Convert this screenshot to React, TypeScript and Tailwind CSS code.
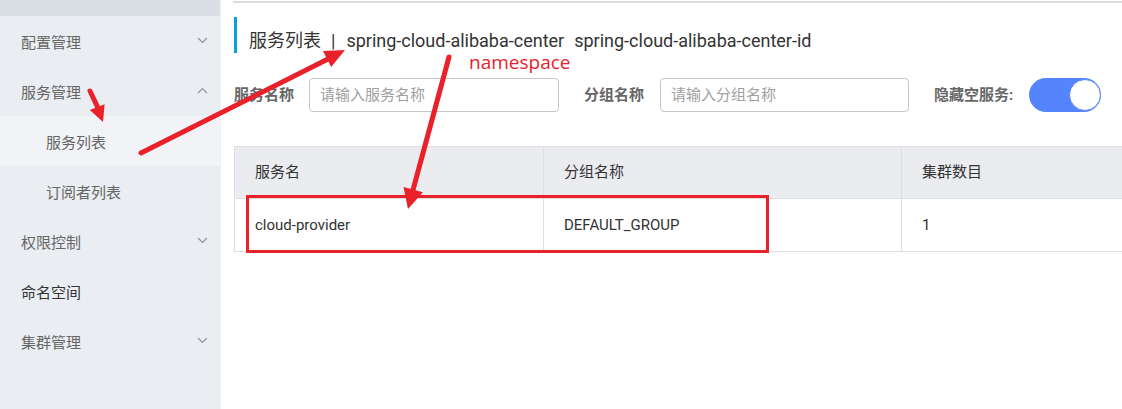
import React from "react";

const font = { fontFamily: 'Roboto, "Noto Sans CJK SC", sans-serif' };

function Chevron({ up }: { up?: boolean }) {
  return (
    <svg width="11" height="7" viewBox="0 0 11 7" className="text-[#8f9399]">
      <polyline
        points={up ? "1,6 5.5,1.5 10,6" : "1,1 5.5,5.5 10,1"}
        fill="none"
        stroke="currentColor"
        strokeWidth="1.1"
      />
    </svg>
  );
}

function NavItem({ label, chevron, dark }: { label: string; chevron?: "up" | "down"; dark?: boolean }) {
  return (
    <div className="h-[50px] flex items-center justify-between pl-[21px] pr-[12px] pt-[4px]">
      <span className={`text-[15px] ${dark ? "text-[#333]" : "text-[#666]"}`}>{label}</span>
      {chevron && (
        <span className="-mt-[6px]">
          <Chevron up={chevron === "up"} />
        </span>
      )}
    </div>
  );
}

function SubItem({ label, active }: { label: string; active?: boolean }) {
  return (
    <div className={`h-[50px] flex items-center pl-[46px] pt-[4px] ${active ? "bg-[#f2f3f7]" : ""}`}>
      <span className="text-[15px] text-[#666]">{label}</span>
    </div>
  );
}

export default function App() {
  return (
    <div className="relative w-[1122px] h-[409px] overflow-hidden flex bg-white" style={font}>
      {/* Sidebar */}
      <div className="w-[220px] h-full bg-[#eaedf1] flex flex-col shrink-0">
        <div className="h-4 bg-[#d9dde4]" />
        <NavItem label="配置管理" chevron="down" />
        <NavItem label="服务管理" chevron="up" />
        <SubItem label="服务列表" active />
        <SubItem label="订阅者列表" />
        <NavItem label="权限控制" chevron="down" />
        <NavItem label="命名空间" dark />
        <NavItem label="集群管理" chevron="down" />
      </div>
      <div className="w-px h-full bg-[#eef0f3]" />

      {/* Main */}
      <div className="flex-1 min-w-0 pl-[12px] pt-px">
        <div className="h-[2px] bg-[#dcdcdc]" />
        <div className="mt-[14px] h-[36px] flex items-center">
          <div className="w-[3px] h-full bg-[#0ba0d8] ml-px" />
          <div className="pl-[12px] pt-[10px] text-[18px] text-[#333] whitespace-nowrap flex items-center">
            <span>服务列表</span>
            <span className="ml-[10px]">|</span>
            <span className="ml-[11px]">spring-cloud-alibaba-center</span>
            <span className="ml-[10px]">spring-cloud-alibaba-center-id</span>
          </div>
        </div>

        {/* Filter row */}
        <div className="mt-[25px] flex items-center h-[34px] pl-px">
          <span className="w-[60px] text-[15px] font-bold text-[#666] whitespace-nowrap">服务名称</span>
          <div className="ml-[15px] w-[250px] h-[34px] border border-[#c4c6cf] rounded-[4px] flex items-center pl-[10px]">
            <span className="text-[15px] text-[#a0a0a0]">请输入服务名称</span>
          </div>
          <span className="ml-[25px] w-[60px] text-[15px] font-bold text-[#666] whitespace-nowrap">分组名称</span>
          <div className="ml-[16px] w-[249px] h-[34px] border border-[#c4c6cf] rounded-[4px] flex items-center pl-[10px]">
            <span className="text-[15px] text-[#a0a0a0]">请输入分组名称</span>
          </div>
          <span className="ml-[25px] text-[15px] font-bold text-[#666] whitespace-nowrap">隐藏空服务:</span>
          <div className="ml-[16px] w-[72px] h-[34px] rounded-full bg-[#5584ff] relative shrink-0">
            <div className="absolute right-0 top-[1px] w-[32px] h-[32px] rounded-full bg-white border border-[#5584ff]" />
          </div>
        </div>

        {/* Table */}
        <div className="mt-[34px] ml-px w-[900px] border border-[#dcdee3] border-r-0">
          <div className="flex h-[52px] bg-[#ebecf0] border-b border-[#dcdee3]">
            <div className="w-[309px] border-r border-[#dcdee3] flex items-center pl-[20px] text-[15px] text-[#333]">服务名</div>
            <div className="w-[358px] border-r border-[#dcdee3] flex items-center pl-[20px] text-[15px] text-[#333]">分组名称</div>
            <div className="flex-1 flex items-center pl-[20px] text-[15px] text-[#333]">集群数目</div>
          </div>
          <div className="flex h-[52px] bg-white">
            <div className="w-[309px] border-r border-[#dcdee3] flex items-center pl-[20px] text-[15px] text-[#333]">cloud-provider</div>
            <div className="w-[358px] border-r border-[#dcdee3] flex items-center pl-[20px] text-[15px] text-[#333]">DEFAULT_GROUP</div>
            <div className="flex-1 flex items-center pl-[20px] text-[15px] text-[#333]">1</div>
          </div>
        </div>
      </div>

      {/* Annotations */}
      <span
        className="absolute left-[469px] top-[51px] text-[19px] text-[#e8212a] leading-none pt-[2px]"
        style={{ fontFamily: '"Open Sans", sans-serif' }}
      >
        namespace
      </span>
      <svg className="absolute left-0 top-0 pointer-events-none" width="1122" height="409" viewBox="0 0 1122 409">
        <g stroke="#e8212a" strokeWidth="5" strokeLinecap="round" fill="none">
          <line x1="90" y1="91" x2="98" y2="108" />
          <line x1="141" y1="153" x2="328" y2="59" />
          <line x1="449" y1="57" x2="413" y2="190" />
        </g>
        <g fill="#e8212a">
          <polygon points="103,122 89.8,110 104.6,104.2" />
          <polygon points="345,50 331.2,67 323,51" />
          <polygon points="408,209 422.9,192.3 403.5,187.1" />
        </g>
        <rect x="247.5" y="196.5" width="520" height="55" fill="none" stroke="#e8212a" strokeWidth="3" />
      </svg>
    </div>
  );
}
